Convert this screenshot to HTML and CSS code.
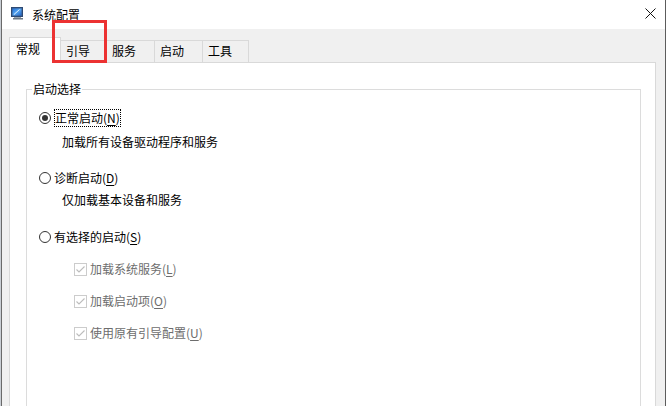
FILE: index.html
```html
<!DOCTYPE html>
<html lang="zh-CN">
<head>
<meta charset="utf-8">
<title>系统配置</title>
<link rel="stylesheet" href="styles.css">
</head>
<body>
<div class="screen">
  <div class="backdrop"></div>
  <div class="window">
    <div class="titlebar">
      <svg class="app-icon" width="13" height="13" viewBox="0 0 13 13">
        <defs>
          <linearGradient id="scr" x1="0" y1="0" x2="1" y2="1">
            <stop offset="0" stop-color="#1e6fd9"/>
            <stop offset="0.5" stop-color="#5aa8f0"/>
            <stop offset="1" stop-color="#1c5fc4"/>
          </linearGradient>
        </defs>
        <rect x="0.5" y="0.5" width="11" height="9" fill="#3d5f8f" stroke="#2e4a73"/>
        <rect x="1.5" y="1.5" width="9" height="7" fill="url(#scr)"/>
        <path d="M3 7.5 L8.5 2.5" stroke="#dff0ff" stroke-width="1"/>
        <rect x="3" y="10" width="7" height="1" fill="#9aa3ad"/>
        <rect x="2" y="11" width="10" height="1.5" fill="#6f7a86"/>
      </svg>
      <span class="title">系统配置</span>
      <svg class="close" width="11" height="11" viewBox="0 0 11 11">
        <path d="M0.5 0.5 L10.5 10.5 M10.5 0.5 L0.5 10.5" stroke="#111" stroke-width="1"/>
      </svg>
    </div>
    <div class="body">
      <div class="tabs">
        <div class="tab active">常规</div>
        <div class="tab w46">引导</div>
        <div class="tab w48">服务</div>
        <div class="tab w48">启动</div>
        <div class="tab w46">工具</div>
      </div>
      <div class="panel">
        <fieldset class="group">
          <legend class="legend">启动选择</legend>
          <div class="options">
            <div class="opt">
              <span class="radio checked"></span>
              <span class="label focus">正常启动(<u>N</u>)</span>
            </div>
            <div class="desc d1">加载所有设备驱动程序和服务</div>
            <div class="opt r2">
              <span class="radio"></span>
              <span class="label">诊断启动(<u>D</u>)</span>
            </div>
            <div class="desc d2">仅加载基本设备和服务</div>
            <div class="opt r3">
              <span class="radio"></span>
              <span class="label">有选择的启动(<u>S</u>)</span>
            </div>
            <div class="check">
              <svg class="box" width="13" height="13" viewBox="0 0 13 13"><rect x="0.5" y="0.5" width="12" height="12" fill="#fff" stroke="#cccccc"/><path d="M2.5 6.5 L5 9 L10.5 3.5" fill="none" stroke="#bcbcbc" stroke-width="1.1"/></svg>
              <span class="clabel">加载系统服务(<u>L</u>)</span>
            </div>
            <div class="check">
              <svg class="box" width="13" height="13" viewBox="0 0 13 13"><rect x="0.5" y="0.5" width="12" height="12" fill="#fff" stroke="#cccccc"/><path d="M2.5 6.5 L5 9 L10.5 3.5" fill="none" stroke="#bcbcbc" stroke-width="1.1"/></svg>
              <span class="clabel">加载启动项(<u>O</u>)</span>
            </div>
            <div class="check">
              <svg class="box" width="13" height="13" viewBox="0 0 13 13"><rect x="0.5" y="0.5" width="12" height="12" fill="#fff" stroke="#cccccc"/><path d="M2.5 6.5 L5 9 L10.5 3.5" fill="none" stroke="#bcbcbc" stroke-width="1.1"/></svg>
              <span class="clabel">使用原有引导配置(<u>U</u>)</span>
            </div>
          </div>
        </fieldset>
      </div>
    </div>
  </div>
  <div class="highlight"></div>
</div>
</body>
</html>
```
FILE: styles.css
```css
* { box-sizing: border-box; }
html, body { margin: 0; padding: 0; }
body {
  width: 666px;
  height: 406px;
  overflow: hidden;
  font-family: "Noto Sans CJK SC", "Microsoft YaHei", sans-serif;
  font-size: 12px;
  color: #000;
  background: #f0f0f0;
}
.screen {
  position: relative;
  display: flex;
  width: 666px;
  height: 406px;
  overflow: hidden;
}
.backdrop {
  width: 1px;
  background: #c9ced4;
}
.window {
  flex: 1;
  display: flex;
  flex-direction: column;
  border-left: 1px solid #6a6a6a;
  border-right: 1px solid #5c5c5c;
  background: #f0f0f0;
}
.titlebar {
  height: 29px;
  flex: none;
  background: #fff;
  display: flex;
  align-items: center;
}
.app-icon {
  margin-left: 9px;
  margin-top: -3px;
  flex: none;
}
.title {
  margin-left: 8px;
  line-height: 16px;
}
.close {
  margin-left: auto;
  margin-right: 9px;
  align-self: flex-start;
  margin-top: 8px;
}
.body {
  flex: 1;
  padding: 8px 9px 0 7px;
  overflow: hidden;
}
.tabs {
  display: flex;
  align-items: flex-end;
  height: 25px;
}
.tab {
  height: 22px;
  border-top: 1px solid #d9d9d9;
  border-right: 1px solid #d9d9d9;
  padding: 1px 0 0 5px;
  line-height: 18px;
  background: #f0f0f0;
  white-space: nowrap;
}
.tab.active {
  position: relative;
  z-index: 1;
  width: 52px;
  height: 26px;
  margin-bottom: -1px;
  border-left: 1px solid #d9d9d9;
  background: #fff;
  padding: 2px 0 0 6px;
}
.w46 { width: 46px; }
.w48 { width: 48px; }
.panel {
  height: 420px;
  background: #fff;
  border: 1px solid #d9d9d9;
  padding: 0;
}
.group {
  margin: 18px 14px 0 16px;
  padding: 0;
  height: 420px;
  border: 1px solid #dcdcdc;
  min-width: 0;
}
.legend {
  margin-left: 5px;
  padding: 0 1px;
  line-height: 16px;
  color: #000;
}
.options {
  padding: 12px 0 0 12px;
}
.opt {
  display: flex;
  align-items: center;
  height: 18px;
}
.radio {
  flex: none;
  width: 12px;
  height: 12px;
  border: 1px solid #333;
  border-radius: 50%;
  display: flex;
  align-items: center;
  justify-content: center;
  background: #fff;
}
.radio.checked::after {
  content: "";
  width: 6px;
  height: 6px;
  border-radius: 50%;
  background: #333;
}
.label {
  margin-left: 3px;
  line-height: 16px;
}
.label.focus {
  border: 1px dotted #000;
  padding: 0 0 0 0;
  line-height: 16px;
}
.desc {
  margin-left: 23px;
  line-height: 18px;
  height: 18px;
}
.d1 { margin-top: 6px; }
.r2 { margin-top: 18px; }
.d2 { margin-top: 4px; }
.r3 { margin-top: 19px; }
.check {
  display: flex;
  align-items: center;
  height: 18px;
  margin-top: 14px;
  margin-left: 35px;
}
.box { flex: none; }
.clabel {
  margin-left: 3px;
  color: #6d6d6d;
  line-height: 16px;
}
u { text-underline-offset: 2px; }
.highlight {
  position: absolute;
  z-index: 5;
  left: 52px;
  top: 20px;
  width: 55px;
  height: 43px;
  border: 3px solid #ec3232;
}
```
